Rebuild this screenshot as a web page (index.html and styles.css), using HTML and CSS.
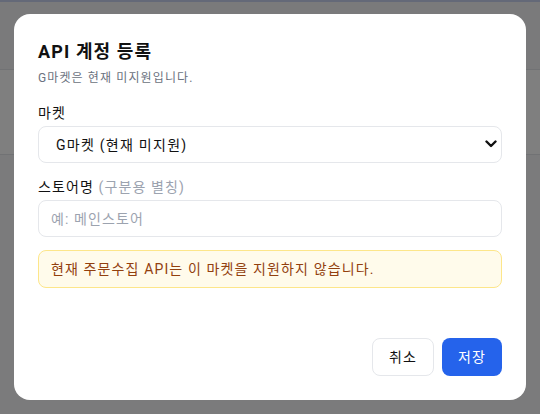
FILE: index.html
```html
<!DOCTYPE html>
<html lang="ko">
<head>
    <meta charset="UTF-8">
    <meta name="viewport" content="width=device-width, initial-scale=1.0">
    <title>API 계정 등록</title>
    <link rel="stylesheet" href="styles.css">
</head>
<body>
    <!-- Page behind the dialog -->
    <div class="page">
        <header class="page-header"></header>
        <div class="page-toolbar"></div>
        <div class="page-body"></div>
    </div>

    <!-- Register modal -->
    <div class="overlay">
        <div class="modal">
            <h2 class="modal-title">API 계정 등록</h2>
            <p class="modal-sub">G마켓은 현재 미지원입니다.</p>

            <div class="field">
                <label class="field-label" for="market">마켓</label>
                <div class="select-wrap">
                    <select id="market" class="control select">
                        <option>G마켓 (현재 미지원)</option>
                        <option>쿠팡</option>
                        <option>스마트스토어</option>
                    </select>
                    <svg class="chevron" width="12" height="8" viewBox="0 0 12 8">
                        <path d="M1.5 1.5 L6 6 L10.5 1.5" fill="none" stroke="#111" stroke-width="2.4" stroke-linecap="round" stroke-linejoin="round"/>
                    </svg>
                </div>
            </div>

            <div class="field field-store">
                <label class="field-label" for="store">스토어명 <span class="hint">(구분용 별칭)</span></label>
                <input id="store" class="control" type="text" placeholder="예: 메인스토어">
            </div>

            <div class="notice">현재 주문수집 API는 이 마켓을 지원하지 않습니다.</div>

            <div class="modal-actions">
                <button class="btn btn-cancel">취소</button>
                <button class="btn btn-save">저장</button>
            </div>
        </div>
    </div>
</body>
</html>
```

FILE: styles.css
```css
* {
    margin: 0;
    padding: 0;
    box-sizing: border-box;
}

body {
    font-family: Roboto, "Noto Sans CJK KR", sans-serif;
    letter-spacing: 0.07em;
    background: #ffffff;
    color: #111827;
    overflow: hidden;
}

/* Page behind */
.page {
    height: 414px;
}

.page-header {
    height: 70px;
    background: #f4f5f7;
    border-top: 2px solid #c9d3f0;
    border-bottom: 1px solid #e3e5e8;
}

.page-toolbar {
    height: 85px;
    background: #ffffff;
    border-bottom: 1px solid #e3e5e8;
}

.page-body {
    height: 259px;
    background: #f7f7f8;
}

/* Overlay */
.overlay {
    position: fixed;
    top: 0;
    left: 0;
    width: 100%;
    height: 100%;
    background: rgba(0, 0, 0, 0.5);
    display: flex;
    justify-content: center;
    align-items: center;
}

.modal {
    width: 512px;
    background: #ffffff;
    border-radius: 16px;
    padding: 24px;
}

.modal-title {
    font-size: 18px;
    line-height: 28px;
    font-weight: 700;
    color: #111111;
}

.modal-sub {
    margin-top: 4px;
    font-size: 12px;
    line-height: 16px;
    color: #6b7280;
}

/* Fields */
.field {
    margin-top: 17px;
}

.field-store {
    margin-top: 14px;
}

.field-label {
    display: block;
    font-size: 14px;
    line-height: 20px;
    color: #111111;
    margin-bottom: 3px;
}

.hint {
    color: #9ca3af;
}

.control {
    display: block;
    width: 100%;
    height: 37px;
    border: 1px solid #e5e7eb;
    border-radius: 8px;
    background: #ffffff;
    font-family: inherit;
    font-size: 14px;
    letter-spacing: inherit;
    color: #111111;
    padding: 0 12px;
    outline: none;
}

.control::placeholder {
    color: #9ca3af;
}

.select-wrap {
    position: relative;
}

.select {
    appearance: none;
    padding-left: 17px;
    letter-spacing: 0.09em;
}

.chevron {
    position: absolute;
    right: 5px;
    top: 14px;
    pointer-events: none;
}

/* Notice */
.notice {
    margin-top: 13px;
    background: #fffbeb;
    border: 1px solid #fde68a;
    border-radius: 8px;
    padding: 8px 12px;
    font-size: 14px;
    line-height: 20px;
    color: #92400e;
}

/* Actions */
.modal-actions {
    margin-top: 50px;
    display: flex;
    justify-content: flex-end;
    gap: 8px;
}

.btn {
    font-family: inherit;
    font-size: 14px;
    line-height: 20px;
    letter-spacing: inherit;
    border-radius: 8px;
    cursor: pointer;
}

.btn-cancel {
    background: #ffffff;
    color: #111111;
    border: 1px solid #e5e7eb;
    padding: 8px 16px;
}

.btn-save {
    background: #2563eb;
    color: #ffffff;
    border: none;
    padding: 9px 16px;
}
```
